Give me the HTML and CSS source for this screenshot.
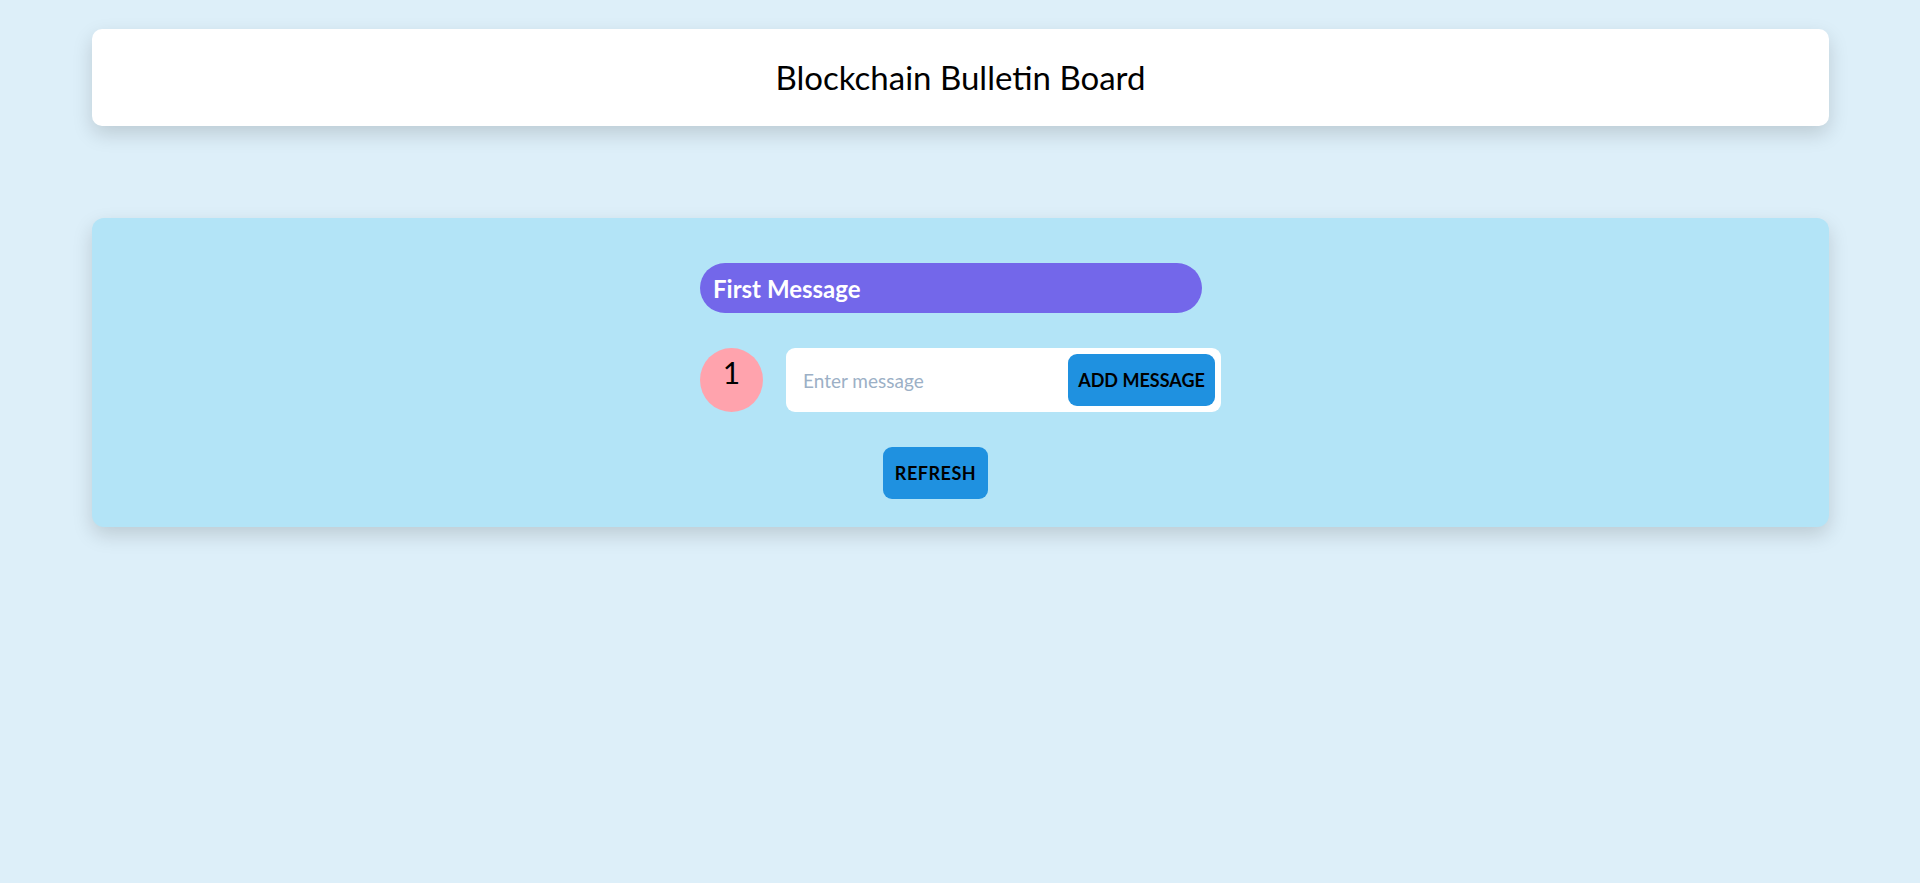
FILE: index.html
```html
<!DOCTYPE html>
<html lang="en">
<head>
<meta charset="utf-8">
<title>Blockchain Bulletin Board</title>
<link rel="stylesheet" href="styles.css">
</head>
<body>
  <header class="topbar">
    <h1 class="title">Blockchain Bulletin Board</h1>
  </header>
  <main class="board">
    <div class="column">
      <div class="pill">First Message</div>
      <div class="row">
        <div class="count">1</div>
        <form class="composer">
          <input class="field" type="text" placeholder="Enter message">
          <button class="btn add" type="button">ADD MESSAGE</button>
        </form>
      </div>
      <button class="btn refresh" type="button">REFRESH</button>
    </div>
  </main>
</body>
</html>
```
FILE: styles.css
```css
html, body {
  margin: 0;
  padding: 0;
}
body {
  background: #ddeff9;
  font-family: "Lato", "Noto Sans", sans-serif;
  color: #000;
  padding-top: 29px;
  min-height: 883px;
  box-sizing: border-box;
}
.topbar {
  margin: 0 91px 0 92px;
  height: 97px;
  background: #fff;
  border-radius: 10px;
  box-shadow: 0 8px 20px rgba(0, 0, 0, 0.15);
  display: flex;
  align-items: center;
  justify-content: center;
}
.title {
  margin: 0;
  font-size: 33px;
  font-weight: 400;
  line-height: 1;
}
.board {
  margin: 92px 91px 0 92px;
  height: 309px;
  box-sizing: border-box;
  padding-top: 45px;
  background: #b3e4f7;
  border-radius: 12px;
  box-shadow: 0 8px 20px rgba(0, 0, 0, 0.15);
  display: flex;
  justify-content: center;
}
.column {
  width: 521px;
  display: flex;
  flex-direction: column;
  align-items: flex-start;
}
.pill {
  width: 502px;
  height: 50px;
  box-sizing: border-box;
  padding-left: 13px;
  border-radius: 25px;
  background: #7367ea;
  color: #fff;
  font-weight: 700;
  font-size: 24px;
  display: flex;
  align-items: center;
}
.row {
  margin-top: 35px;
  display: flex;
  gap: 23px;
  width: 100%;
}
.count {
  width: 63px;
  height: 64px;
  border-radius: 50%;
  background: #ffa3ad;
  font-size: 30px;
  display: flex;
  justify-content: center;
  padding-top: 9px;
  box-sizing: border-box;
  line-height: 1;
}
.composer {
  margin: 0;
  flex: 1;
  height: 64px;
  box-sizing: border-box;
  background: #fff;
  border-radius: 9px;
  padding: 6px 6px 6px 17px;
  display: flex;
  align-items: stretch;
}
.field {
  flex: 1;
  min-width: 0;
  border: none;
  outline: none;
  background: transparent;
  font-family: inherit;
  font-size: 19px;
  padding: 0;
  color: #000;
}
.field::placeholder {
  color: #9cb0c6;
}
.btn {
  border: none;
  background: #1f91e0;
  color: #000;
  font-family: inherit;
  font-weight: 700;
  font-size: 18px;
  border-radius: 9px;
  padding: 0;
  height: 52px;
  cursor: pointer;
}
.add {
  width: 147px;
}
.refresh {
  margin-top: 35px;
  margin-left: 183px;
  width: 105px;
  letter-spacing: 0.5px;
}
```
